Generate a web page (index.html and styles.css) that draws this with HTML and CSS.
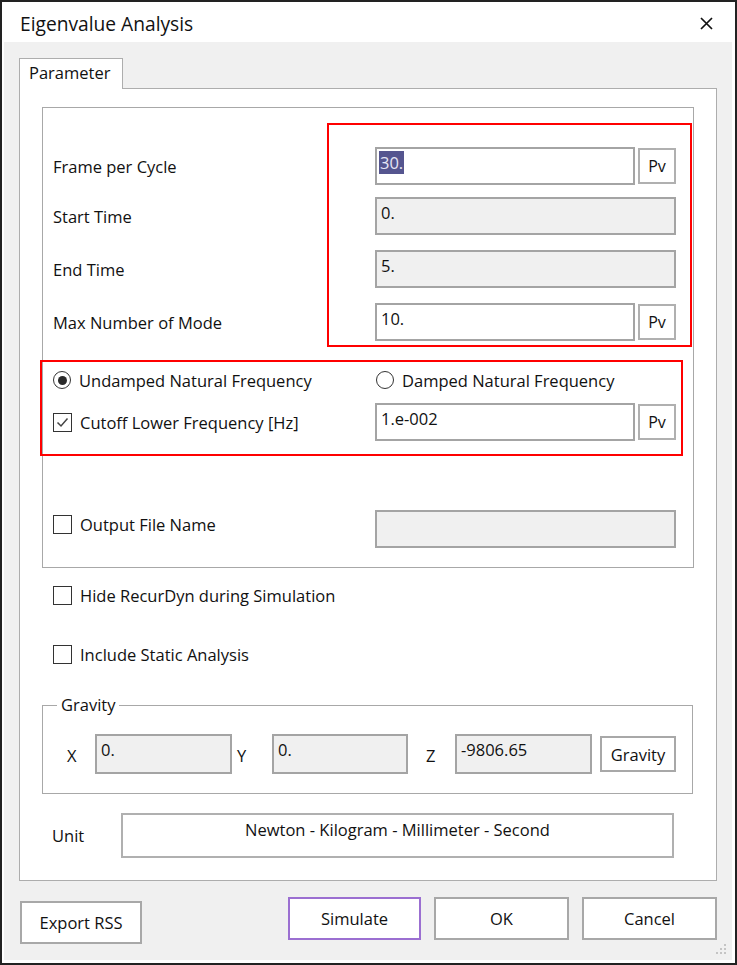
FILE: index.html
```html
<!DOCTYPE html>
<html>
<head>
<meta charset="utf-8">
<title>Eigenvalue Analysis</title>
<link rel="stylesheet" href="styles.css">
</head>
<body>
<div class="window">
  <div class="titlebar">
    <span class="title">Eigenvalue Analysis</span>
    <svg class="close" width="13" height="13" viewBox="0 0 13 13"><path d="M1 1L12 12M12 1L1 12" stroke="#111" stroke-width="1.7" fill="none"/></svg>
  </div>
  <div class="client">
    <div class="tab">Parameter</div>
    <div class="panel">
      <div class="group">
        <div class="row">
          <span class="label">Frame per Cycle</span>
          <div class="field"><div class="input"><span class="sel">30.</span></div><div class="pv">Pv</div></div>
        </div>
        <div class="row gap-s">
          <span class="label">Start Time</span>
          <div class="input ro">0.</div>
        </div>
        <div class="row gap-m">
          <span class="label">End Time</span>
          <div class="input ro">5.</div>
        </div>
        <div class="row gap-m">
          <span class="label">Max Number of Mode</span>
          <div class="field"><div class="input">10.</div><div class="pv">Pv</div></div>
        </div>
        <div class="row gap-l">
          <span class="opt"><span class="radio on"></span>Undamped Natural Frequency</span>
          <span class="opt shift"><span class="radio"></span>Damped Natural Frequency</span>
        </div>
        <div class="row gap-xs">
          <span class="opt"><span class="check"><svg width="15" height="15" viewBox="0 0 15 15"><path d="M2.5 7.5L6 11L12.5 3.5" stroke="#444" stroke-width="1.5" fill="none"/></svg></span>Cutoff Lower Frequency [Hz]</span>
          <div class="field"><div class="input">1.e-002</div><div class="pv">Pv</div></div>
        </div>
        <div class="row gap-xl">
          <span class="opt up"><span class="check"></span>Output File Name</span>
          <div class="input ro"></div>
        </div>
        <div class="annot a1"></div>
        <div class="annot a2"></div>
      </div>
      <div class="solo hide"><span class="opt"><span class="check"></span>Hide RecurDyn during Simulation</span></div>
      <div class="solo static"><span class="opt"><span class="check"></span>Include Static Analysis</span></div>
      <fieldset class="gravity">
        <legend>Gravity</legend>
        <div class="grow">
          <span class="axis ax-x">X</span>
          <div class="input ro gin w136">0.</div>
          <span class="axis ax-y">Y</span>
          <div class="input ro gin w135">0.</div>
          <span class="axis ax-z">Z</span>
          <div class="input ro gin w136">-9806.65</div>
          <div class="btn gbtn">Gravity</div>
        </div>
      </fieldset>
      <div class="unit-row">
        <span class="unit-label">Unit</span>
        <div class="unit-box">Newton - Kilogram - Millimeter - Second</div>
      </div>
    </div>
    <div class="buttons">
      <div class="btn export">Export RSS</div>
      <div class="btn simulate">Simulate</div>
      <div class="btn ok">OK</div>
      <div class="btn cancel">Cancel</div>
    </div>
    <svg class="grip" width="14" height="14" viewBox="0 0 14 14">
      <rect x="11" y="1" width="2" height="2" fill="#c4c4c4"/>
      <rect x="7" y="5" width="2" height="2" fill="#c4c4c4"/>
      <rect x="11" y="5" width="2" height="2" fill="#c4c4c4"/>
      <rect x="3" y="9" width="2" height="2" fill="#c4c4c4"/>
      <rect x="7" y="9" width="2" height="2" fill="#c4c4c4"/>
      <rect x="11" y="9" width="2" height="2" fill="#c4c4c4"/>
    </svg>
  </div>
</div>
</body>
</html>
```
FILE: styles.css
```css
body {
  margin: 0;
  font-family: "Open Sans", "Noto Sans", sans-serif;
  font-size: 16.5px;
  color: #111;
  background: #fff;
}

.window {
  width: 737px;
  height: 965px;
  box-sizing: border-box;
  border: 2px solid #222;
  background: #fff;
  display: flex;
  flex-direction: column;
}

.titlebar {
  height: 40px;
  flex-shrink: 0;
  display: flex;
  align-items: center;
  justify-content: space-between;
  padding: 2px 22px 0 18px;
  box-sizing: border-box;
}

.title {
  font-size: 19.2px;
}

.client {
  flex: 1;
  margin: 0 3px 3px 2px;
  background: #f0f0f0;
  padding: 16px 15px 0 15px;
  position: relative;
  display: flex;
  flex-direction: column;
}

.tab {
  width: 104px;
  height: 31px;
  box-sizing: border-box;
  border: 1px solid #adadad;
  border-bottom: 0;
  background: #fff;
  padding-left: 9px;
  line-height: 28px;
  margin-bottom: -1px;
  position: relative;
  z-index: 1;
}

.panel {
  height: 793px;
  box-sizing: border-box;
  border: 1px solid #adadad;
  background: #fff;
  padding: 18px 0 0 22px;
  flex-shrink: 0;
}

.group {
  width: 652px;
  box-sizing: border-box;
  border: 1px solid #a8a8a8;
  padding: 39px 0 19px 10px;
  position: relative;
}

.row {
  display: grid;
  grid-template-columns: 322px 301px;
  align-items: center;
  height: 38px;
}

.gap-xs { margin-top: 4px; }
.gap-s { margin-top: 12px; }
.gap-m { margin-top: 15px; }
.gap-l { margin-top: 20px; }
.gap-xl { margin-top: 69px; }

.field {
  display: flex;
  align-items: center;
  gap: 3px;
}

.input {
  box-sizing: border-box;
  height: 38px;
  border: 2px solid #a4a4a4;
  background: #fff;
  padding: 3px 4px 0 4px;
  line-height: 22px;
  flex: 1;
  white-space: nowrap;
}

.input.ro {
  background: #f0f0f0;
}

.sel {
  background: #55558f;
  color: #e6e6f5;
  margin-left: -2px;
  padding: 0 1px;
}

.pv {
  width: 38px;
  height: 36px;
  box-sizing: border-box;
  border: 2px solid #b0b0b0;
  background: #fff;
  display: flex;
  align-items: center;
  justify-content: center;
  font-size: 16px;
  flex-shrink: 0;
}

.opt {
  display: flex;
  align-items: center;
  gap: 8px;
  white-space: nowrap;
}

.opt.up {
  margin-top: -10px;
}

.shift {
  margin-left: 1px;
}

.radio {
  width: 18px;
  height: 18px;
  box-sizing: border-box;
  border: 1.7px solid #333;
  border-radius: 50%;
  background: #fff;
  display: flex;
  align-items: center;
  justify-content: center;
  flex-shrink: 0;
}

.radio.on::after {
  content: "";
  width: 9px;
  height: 9px;
  border-radius: 50%;
  background: #2a2a2a;
}

.check {
  width: 19px;
  height: 19px;
  box-sizing: border-box;
  border: 1.6px solid #333;
  background: #fff;
  display: flex;
  align-items: center;
  justify-content: center;
  flex-shrink: 0;
}

.annot {
  position: absolute;
  box-sizing: border-box;
  border: 2px solid #ff0000;
  pointer-events: none;
}

.a1 {
  left: 284px;
  top: 15px;
  width: 365px;
  height: 224px;
}

.a2 {
  left: -3px;
  top: 252px;
  width: 643px;
  height: 96px;
}

.solo {
  display: flex;
  height: 20px;
  align-items: center;
  padding-left: 11px;
}

.hide { margin-top: 17px; }
.static { margin-top: 39px; }

.gravity {
  width: 651px;
  box-sizing: border-box;
  margin: 31px 0 0 0;
  padding: 19px 0 19px 24px;
  border: 1px solid #a8a8a8;
  min-inline-size: 0;
}

.gravity legend {
  margin-left: -10px;
  padding: 0 4px;
  line-height: 20px;
}

.grow {
  display: flex;
  align-items: center;
}

.axis {
  padding-top: 2px;
}

.ax-x { width: 28px; }
.ax-y { width: 35px; margin-left: 5px; }
.ax-z { width: 29px; margin-left: 18px; }

.gin {
  flex: none;
  height: 40px;
  padding-top: 3px;
}

.w136 { width: 137px; }
.w135 { width: 136px; }

.btn {
  box-sizing: border-box;
  border: 2px solid #a8a8a8;
  background: #fff;
  display: flex;
  align-items: center;
  justify-content: center;
}

.gbtn {
  width: 76px;
  height: 36px;
  margin-left: 8px;
}

.unit-row {
  display: flex;
  align-items: center;
  margin-top: 19px;
}

.unit-label {
  width: 79px;
  padding-left: 10px;
  box-sizing: border-box;
  flex-shrink: 0;
}

.unit-box {
  width: 553px;
  height: 45px;
  box-sizing: border-box;
  border: 2px solid #b0b0b0;
  text-align: center;
  padding-top: 4px;
  line-height: 22px;
}

.buttons {
  display: flex;
  align-items: flex-start;
  gap: 13px;
  margin-top: 16px;
}

.buttons .btn {
  height: 43px;
}

.export {
  width: 122px;
  margin-top: 4px;
  margin-left: 1px;
}

.simulate {
  width: 133px;
  margin-left: auto;
  border-color: #9b6fd1;
}

.ok { width: 135px; }
.cancel { width: 135px; }

.grip {
  position: absolute;
  right: 5px;
  bottom: 3px;
}
```
